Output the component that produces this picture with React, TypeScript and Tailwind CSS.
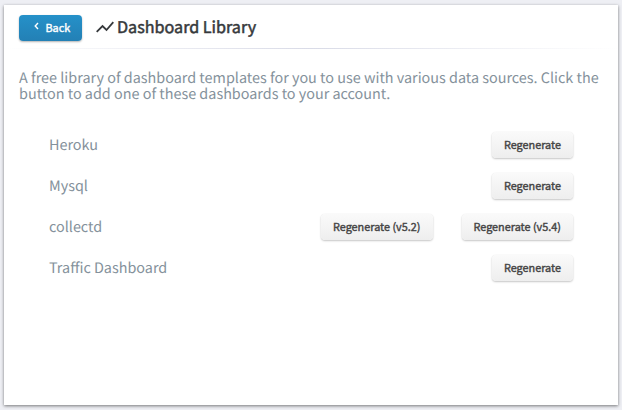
import type { ReactNode } from "react";

const rows = [
  { name: "Heroku", actions: ["Regenerate"] },
  { name: "Mysql", actions: ["Regenerate"] },
  { name: "collectd", actions: ["Regenerate (v5.2)", "Regenerate (v5.4)"] },
  { name: "Traffic Dashboard", actions: ["Regenerate"] },
];

function ActionButton({ children }: { children: ReactNode }) {
  return (
    <button className="flex h-[26px] items-center justify-center rounded-[4px] bg-linear-to-b from-[#fafafa] to-[#eeeeee] px-[12px] pb-[2px] text-[10.85px] leading-[16px] text-[#444444] shadow-[0_1px_2px_rgba(0,0,0,0.22),0_0_1px_rgba(0,0,0,0.1)] [-webkit-text-stroke:0.4px_#444444]">
      {children}
    </button>
  );
}

export default function App() {
  return (
    <div className="h-[410px] w-[622px] bg-[#eeeff4] pt-[5px] pl-[4px] font-['Noto_Sans_CJK_SC','Noto_Sans',sans-serif] [text-rendering:geometricPrecision]">
      <main className="h-[400px] w-[614px] bg-white shadow-[0_1px_3px_rgba(0,0,0,0.5)]">
        <header className="flex h-[43px] items-center pt-px pl-[15px]">
          <button className="mt-px flex h-[26px] w-[63px] items-center rounded-[4px] bg-linear-to-b from-[#2591c9] to-[#2380b5] pb-[2px] pl-[15px] text-[10.85px] leading-[16px] text-white shadow-[0_1px_2px_rgba(0,0,0,0.3)] [-webkit-text-stroke:0.4px_white]">
            <svg className="mt-[-1px] mr-[6.5px]" width="5" height="8" viewBox="0 0 5 8" fill="none" stroke="white" strokeWidth="1.4">
              <path d="M4 1 1.2 4 4 7" />
            </svg>
            Back
          </button>
          <svg className="mt-[-1px] ml-[14px]" width="18" height="12" viewBox="0 0 18 12" fill="none" stroke="#36393c" strokeWidth="1.8">
            <path d="M.7 10.8 6.5 5l4 4L17.3 1.2" />
          </svg>
          <h1 className="mt-[-2px] ml-[3px] text-[16.15px] leading-[24px] whitespace-nowrap text-[#36393c] [-webkit-text-stroke:0.5px_#36393c]">Dashboard Library</h1>
        </header>
        <div className="h-px bg-linear-to-r from-white via-[#d9dbe7] to-white" />
        <p className="mt-[21px] ml-[15px] text-[14.4px] leading-[16px] whitespace-nowrap text-[#84919b]">
          A free library of dashboard templates for you to use with various data sources. Click the
          <br />
          button to add one of these dashboards to your account.
        </p>
        <ul className="mt-[22px] mr-[45px] ml-[45px]">
          {rows.map((row) => (
            <li key={row.name} className="flex h-[41px] items-center justify-between">
              <span className="text-[14.4px] leading-[16px] text-[#84919b]">{row.name}</span>
              <div className="flex gap-[29px]">
                {row.actions.map((action) => (
                  <ActionButton key={action}>{action}</ActionButton>
                ))}
              </div>
            </li>
          ))}
        </ul>
      </main>
    </div>
  );
}
